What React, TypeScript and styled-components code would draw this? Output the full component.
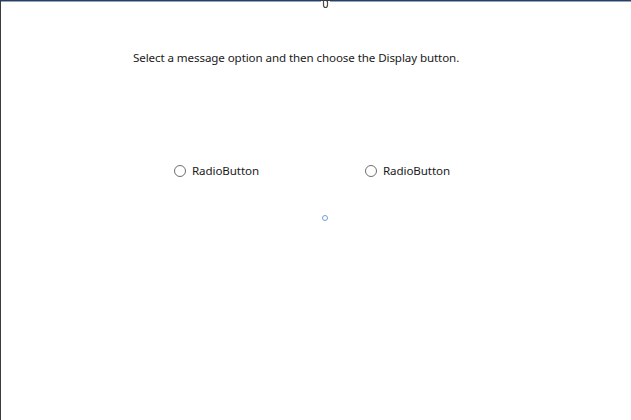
import React from 'react';
import styled, { createGlobalStyle } from 'styled-components';

const GlobalStyle = createGlobalStyle`
  html, body {
    margin: 0;
    padding: 0;
    background: #ffffff;
  }
  body {
    font-family: 'Noto Sans', 'Open Sans', sans-serif;
  }
`;

const Surface = styled.div`
  position: relative;
  box-sizing: border-box;
  width: 631px;
  height: 420px;
  border-left: 1px solid #3c3c3c;
  border-top: 1px solid #3c3c3c;
  overflow: hidden;
`;

const SelectionEdge = styled.div`
  height: 1px;
  background: #7fa7dc;
`;

const Handle = styled.svg`
  position: absolute;
  top: -1px;
  left: 320px;
  background: #ffffff;
`;

const Prompt = styled.p`
  margin: 48px 0 0 132px;
  font-size: 11.6px;
  line-height: 16px;
  color: #1a1a1a;
  letter-spacing: -0.1px;
`;

const OptionRow = styled.div`
  display: flex;
  margin: 97px 0 0 173px;
`;

const Option = styled.label`
  display: flex;
  align-items: center;
  width: 191px;
  font-size: 11.6px;
  line-height: 16px;
  color: #1a1a1a;
  letter-spacing: -0.1px;
`;

const RadioCircle = styled.span`
  box-sizing: border-box;
  width: 12px;
  height: 12px;
  border: 1px solid #6e6e6e;
  border-radius: 50%;
  margin-right: 6px;
`;

const Anchor = styled.span`
  display: block;
  box-sizing: border-box;
  width: 6px;
  height: 6px;
  margin: 36px 0 0 321px;
  border: 1px solid #6f9ee0;
  border-radius: 50%;
`;

export default function App() {
  return (
    <>
      <GlobalStyle />
      <Surface>
        <SelectionEdge />
        <Handle width="9" height="9" viewBox="0 0 9 9">
          <path d="M2.5 0 V5 Q2.5 7.5 4.5 7.5 Q6.5 7.5 6.5 5 V1.5 L5.2 0.6" fill="none" stroke="#4a4a4a" strokeWidth="1.2" />
        </Handle>
        <Prompt>Select a message option and then choose the Display button.</Prompt>
        <OptionRow>
          <Option>
            <RadioCircle />
            RadioButton
          </Option>
          <Option>
            <RadioCircle />
            RadioButton
          </Option>
        </OptionRow>
        <Anchor />
      </Surface>
    </>
  );
}
